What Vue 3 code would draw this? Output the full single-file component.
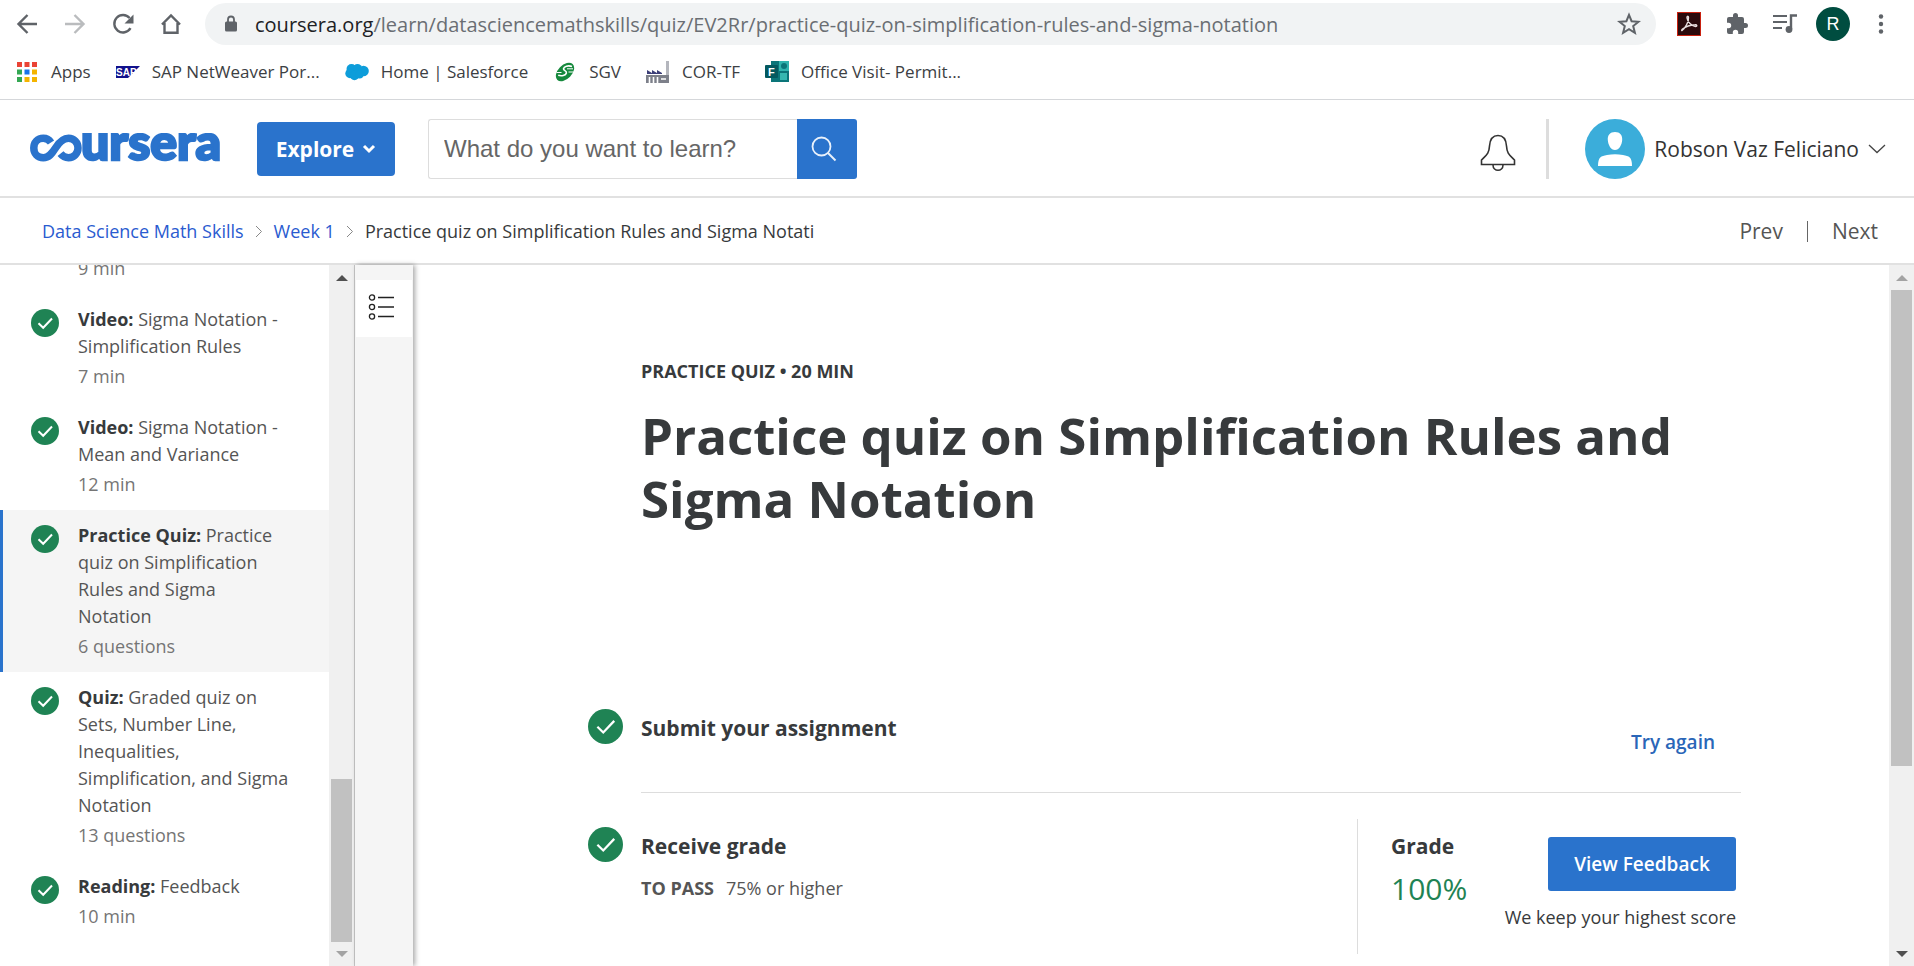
<script setup>
const lessons = [
  { meta: '9 min' },
  { kind: 'Video:', title: 'Sigma Notation - Simplification Rules', meta: '7 min' },
  { kind: 'Video:', title: 'Sigma Notation - Mean and Variance', meta: '12 min' },
  { kind: 'Practice Quiz:', title: 'Practice quiz on Simplification Rules and Sigma Notation', meta: '6 questions', current: true },
  { kind: 'Quiz:', title: 'Graded quiz on Sets, Number Line, Inequalities, Simplification, and Sigma Notation', meta: '13 questions' },
  { kind: 'Reading:', title: 'Feedback', meta: '10 min' },
]
const appColors = ['#ea4335', '#ea4335', '#ea4335', '#34a853', '#1a73e8', '#f4b400', '#34a853', '#f4b400', '#f4b400']
</script>

<template>
  <div class="window">
    <div class="chrome">
      <div class="toolbar">
        <div class="nav">
          <button aria-label="Back"><svg viewBox="0 0 24 24"><path d="M22 12H4M12.500 3L3.500 12l9 9" fill="none" stroke="#5f6368" stroke-width="2.400" /></svg></button>
          <button aria-label="Forward"><svg viewBox="0 0 24 24"><path d="M2 12h18M11.500 3l9 9-9 9" fill="none" stroke="#babcbe" stroke-width="2.400" /></svg></button>
          <button aria-label="Reload"><svg viewBox="0 0 24 24"><path d="M19.500 16.200A8.700 8.700 0 1 1 18.600 6" fill="none" stroke="#5f6368" stroke-width="2.400" /><path d="M22.500 2.500v9h-9z" fill="#5f6368" /></svg></button>
          <button aria-label="Home"><svg viewBox="0 0 24 24"><path d="M3 12.500L12 3.500l9 9M5.500 11v9.800h13V11" fill="none" stroke="#5f6368" stroke-width="2.400" /></svg></button>
        </div>
        <div class="omnibox">
          <svg class="lock" viewBox="0 0 14 18"><rect x="1" y="6.500" width="12" height="10" rx="1.500" fill="#5f6368" /><path d="M4 7V4.500a3 3 0 0 1 6 0V7" fill="none" stroke="#5f6368" stroke-width="1.800" /></svg>
          <span class="url"><span class="host">coursera.org</span>/learn/datasciencemathskills/quiz/EV2Rr/practice-quiz-on-simplification-rules-and-sigma-notation</span>
          <button class="star" aria-label="Bookmark this page"><svg viewBox="0 0 24 24"><path d="M12 2.800l2.600 6.400 6.900.5-5.300 4.400 1.700 6.700L12 17.100l-5.900 3.700 1.700-6.700L2.500 9.700l6.900-.5z" fill="none" stroke="#5f6368" stroke-width="2" /></svg></button>
        </div>
        <div class="extensions">
          <button aria-label="Acrobat"><svg viewBox="0 0 24 24"><rect x=".5" y=".5" width="23" height="23" fill="#2b0a0c" stroke="#c8200f" /><path d="M5 18.500c3-2 7-9 6.500-13-.3-1.800-1.800-1.500-1.500.5.600 4 4.500 8 8.500 8.500 2 0 1.500-2-.5-1.700-4 .3-9 1.700-12.500 4.200-1.300 1.200-.8 2-.5 1.500" fill="none" stroke="#e8dede" stroke-width="1.400" /></svg></button>
          <button aria-label="Extensions"><svg viewBox="0 0 24 24"><path d="M20.500 11H19V7a2 2 0 0 0-2-2h-4V3.500a2.500 2.500 0 0 0-5 0V5H4a2 2 0 0 0-2 2v3.800h1.500a2.700 2.700 0 0 1 0 5.400H2V20a2 2 0 0 0 2 2h3.800v-1.500a2.700 2.700 0 0 1 5.400 0V22H17a2 2 0 0 0 2-2v-4h1.500a2.500 2.500 0 0 0 0-5z" fill="#5f6368" /></svg></button>
          <button aria-label="Media controls"><svg viewBox="0 0 24 24"><path d="M0 4h14M0 10h14M0 16h9" stroke="#5f6368" stroke-width="2.200" /><path d="M18 17V3.500h6" fill="none" stroke="#5f6368" stroke-width="2.400" /><circle cx="16" cy="17.500" r="3.400" fill="#5f6368" /></svg></button>
          <button class="profile">R</button>
          <button aria-label="Menu"><svg viewBox="0 0 24 24"><g fill="#5f6368"><circle cx="12" cy="4.500" r="2.200" /><circle cx="12" cy="12" r="2.200" /><circle cx="12" cy="19.500" r="2.200" /></g></svg></button>
        </div>
      </div>
      <nav class="bookmarks" aria-label="Bookmarks">
        <a href="#"><svg width="24" height="24" viewBox="0 0 24 24"><rect v-for="(c, i) in appColors" :key="i" :x="2 + (i % 3) * 7.500" :y="2 + Math.floor(i / 3) * 7.500" width="5" height="5" :fill="c" /></svg>Apps</a>
        <a href="#"><svg width="24" height="24" viewBox="0 0 24 24"><path d="M0 6h24L12 18H0z" fill="#11118c" /><text x="0" y="15.500" font-family="Liberation Sans" font-weight="700" font-size="10" fill="#fff">SAP</text></svg>SAP NetWeaver Por...</a>
        <a href="#"><svg width="24" height="24" viewBox="0 0 24 24"><g fill="#0d9dda"><circle cx="6.500" cy="9" r="5" /><circle cx="12.500" cy="8.500" r="4.500" /><circle cx="18.500" cy="11" r="5.300" /><circle cx="5" cy="13.500" r="4.700" /><circle cx="9.500" cy="15.500" r="4.700" /><circle cx="14.500" cy="14.500" r="4" /></g></svg>Home | Salesforce</a>
        <a href="#"><svg width="24" height="24" viewBox="0 0 24 24"><ellipse cx="12" cy="12" rx="11" ry="7" transform="rotate(-46 12 12)" fill="#16893d" /><path d="M19 6.500c-4-1.500-8 0-8.500 2.200-.4 2 3.500 2 2.900 4.300-.7 2.600-5 3.300-8.200 2.300" fill="none" stroke="#fff" stroke-width="1.600" /><path d="M14 8.800h6M3.500 12.500h5M15.500 12h5" stroke="#fff" /></svg>SGV</a>
        <a href="#"><svg width="24" height="24" viewBox="0 0 24 24"><path d="M0 15h23v8H0z" fill="#7d808a" /><path d="M20 1h3v14h-3z" fill="#b4b6bd" /><path d="M1 10l5 3v-3l5 3v-3l5 3v1H1z" fill="#3c3f78" /><path d="M3.500 17v6M7.500 17v6M11.500 17v6M15 19h5" stroke="#fff" stroke-width="1.600" /></svg>COR-TF</a>
        <a href="#"><svg width="24" height="24" viewBox="0 0 24 24"><path d="M6 1h18v21H6z" fill="#0b7579" /><path d="M14 1h10v10H14z" fill="#2fb3ae" /><circle cx="19" cy="6" r="3" fill="#0b7579" /><path d="M15 13h7v7h-7z" fill="#35b7b0" /><rect y="5" width="13" height="13" rx="1" fill="#04595f" /><text x="3" y="15.500" font-family="Liberation Sans" font-weight="700" font-size="11" fill="#fff">F</text></svg>Office Visit- Permit...</a>
      </nav>
    </div>

    <header class="site">
      <a class="logo" href="#" aria-label="Coursera">
        <svg width="192" height="32" viewBox="0 0 192 32">
          <path d="M22 9.500C20 6.500 17 5.300 14.300 5.300C8.500 5.300 4.800 9.500 4.800 15S8.500 24.700 14.300 24.700C20 24.700 23 20.500 26.500 15S34 5.300 39.500 5.300C45 5.300 49 9.500 49 15S45 24.700 39.500 24.700C36 24.700 33.500 23.200 31.500 20.700" fill="none" stroke="#2a73cc" stroke-width="7.500" />
          <text x="52" y="27" font-family="Lato" font-weight="900" font-size="50" fill="#2a73cc" stroke="#2a73cc" stroke-width="2.500">ursera</text>
        </svg>
      </a>
      <button class="explore">Explore<svg width="14" height="10" viewBox="0 0 14 10"><path d="M2 2l5 5 5-5" fill="none" stroke="#fff" stroke-width="3" /></svg></button>
      <form class="search" @submit.prevent>
        <input type="text" aria-label="Search" placeholder="What do you want to learn?">
        <button aria-label="Submit search"><svg width="26" height="26" viewBox="0 0 26 26"><circle cx="10.500" cy="10.500" r="9" fill="none" stroke="#e9f1fb" stroke-width="1.800" /><path d="M17 17l7.500 7.500" stroke="#e9f1fb" stroke-width="2" /></svg></button>
      </form>
      <button class="bell" aria-label="Notifications"><svg width="36" height="38" viewBox="0 0 36 38"><path d="M1.500 30.500v-4.500c5-5 7.500-6 8-14C10 5 13 1.500 18 1.500S26 5 26.500 12c.5 8 3 9 8 14v4.500zM13 31c0 7 10 7 10 0" fill="none" stroke="#333" stroke-width="1.600" /></svg></button>
      <button class="account">
        <svg width="60" height="60" viewBox="0 0 60 60"><circle cx="30" cy="30" r="30" fill="#3badda" /><path d="M30 13c5 0 7.500 3 7.200 8-.3 5-3.200 10-7.200 10s-6.900-5-7.200-10c-.3-5 2.200-8 7.200-8zM13 47c0-9 3-10 9-11q8-1.500 16 0c6 1 9 2 9 11z" fill="#fff" /></svg>
        <span>Robson Vaz Feliciano</span>
        <svg class="chev" width="18" height="10" viewBox="0 0 18 10"><path d="M1 1l8 7.500L17 1" fill="none" stroke="#444" stroke-width="1.300" /></svg>
      </button>
    </header>

    <div class="crumbbar">
      <nav class="crumbs" aria-label="Breadcrumb">
        <a href="#">Data Science Math Skills</a>
        <svg width="8" height="13" viewBox="0 0 8 13"><path d="M1 1l5.500 5.500L1 12" fill="none" stroke="#888" /></svg>
        <a href="#">Week 1</a>
        <svg width="8" height="13" viewBox="0 0 8 13"><path d="M1 1l5.500 5.500L1 12" fill="none" stroke="#888" /></svg>
        <span>Practice quiz on Simplification Rules and Sigma Notati</span>
      </nav>
      <nav class="pager" aria-label="Lesson navigation"><a href="#">Prev</a><i></i><a href="#">Next</a></nav>
    </div>

    <div class="body">
      <aside class="sidebar">
        <ul class="lessons">
          <li v-for="l in lessons" :key="l.meta" :class="{ current: l.current, partial: !l.title }">
            <svg v-if="l.title" class="check" viewBox="0 0 28 28"><circle cx="14" cy="14" r="14" fill="#1f8354" /><path d="M7.500 14.200l4.700 4.600L21 9.500" fill="none" stroke="#fff" stroke-width="2" /></svg>
            <a href="#"><span v-if="l.title" class="name"><b>{{ l.kind }}</b> {{ l.title }}</span><span class="meta">{{ l.meta }}</span></a>
          </li>
        </ul>
        <div class="bar lesson-bar"><span class="up dark"></span><div class="track"><div class="thumb"></div></div><span class="down"></span></div>
      </aside>
      <div class="rail">
        <button aria-label="Toggle outline"><svg width="28" height="28" viewBox="0 0 28 28"><g fill="none" stroke="#222" stroke-width="1.300"><circle cx="4" cy="4.500" r="2.600" /><circle cx="4" cy="14" r="2.600" /><circle cx="4" cy="23.500" r="2.600" /><path d="M10 4.500h16M10 14h16M10 23.500h16" /></g></svg></button>
      </div>
      <main>
        <div class="eyebrow">PRACTICE QUIZ • 20 MIN</div>
        <h1>Practice quiz on Simplification Rules and Sigma Notation</h1>
        <section class="step submit">
          <svg class="check big" viewBox="0 0 28 28"><circle cx="14" cy="14" r="14" fill="#1f8354" /><path d="M7.500 14.200l4.700 4.600L21 9.500" fill="none" stroke="#fff" stroke-width="1.800" /></svg>
          <div class="content">
            <h2>Submit your assignment</h2>
            <button class="again">Try again</button>
          </div>
        </section>
        <section class="step">
          <svg class="check big" viewBox="0 0 28 28"><circle cx="14" cy="14" r="14" fill="#1f8354" /><path d="M7.500 14.200l4.700 4.600L21 9.500" fill="none" stroke="#fff" stroke-width="1.800" /></svg>
          <div class="content">
            <div>
              <h2>Receive grade</h2>
              <p class="pass"><b>TO PASS</b><span>75% or higher</span></p>
            </div>
            <div class="grade">
              <div><h2>Grade</h2><p class="score">100%</p></div>
              <div class="feedback"><button>View Feedback</button><p>We keep your highest score</p></div>
            </div>
          </div>
        </section>
      </main>
      <div class="bar page-bar"><span class="up"></span><div class="track"><div class="thumb"></div></div><span class="down dark"></span></div>
    </div>
  </div>
</template>

<style>
body { margin: 0; }
</style>

<style scoped>
* { box-sizing: border-box; }
.window { height: 100vh; display: flex; flex-direction: column; overflow: hidden; background: #fff; color: #373a3c; font: 18px/27px "Open Sans", "Noto Sans", sans-serif; }
button { font: inherit; color: inherit; background: none; border: 0; padding: 0; display: flex; align-items: center; justify-content: center; flex: none; }
a { color: inherit; text-decoration: none; }
svg { display: block; flex: none; }
h1, h2, p, ul { margin: 0; padding: 0; }

.chrome { flex: none; padding-bottom: 4px; border-bottom: 1px solid #d5d7da; }
.toolbar { display: flex; align-items: center; height: 48px; padding: 0 21px 0 15px; }
.nav, .extensions { display: flex; align-items: center; gap: 24px; }
.nav svg, .extensions svg, .star svg { width: 24px; height: 24px; }
.omnibox { flex: 1; min-width: 0; display: flex; align-items: center; height: 42px; margin: 0 21px 0 22px; padding: 0 15px 0 19px; border-radius: 21px; background: #f1f3f4; }
.lock { width: 14px; height: 18px; }
.url { flex: 1; min-width: 0; margin-left: 17px; overflow: hidden; white-space: nowrap; color: #6a6e73; font-size: 20px; }
.host { color: #202124; }
.profile { width: 34px; height: 34px; margin: 0 -5px; border-radius: 50%; background: #004d40; color: #fff; font: 18px "Liberation Sans", sans-serif; }
.bookmarks { display: flex; align-items: center; height: 47px; padding-left: 15px; gap: 25px; color: #3c4043; font-size: 17px; }
.bookmarks a { display: flex; align-items: center; gap: 12px; white-space: nowrap; }

.site { flex: none; display: flex; align-items: center; height: 98px; padding: 2px 28px 0 29px; border-bottom: 2px solid #e1e1e1; }
.explore { width: 138px; height: 54px; margin: 0 33px 0 36px; gap: 8px; border-radius: 4px; background: #2a73cc; color: #fff; font-size: 21px; font-weight: 700; }
.search { display: flex; height: 60px; }
.search input { width: 369px; min-width: 0; padding: 0 15px; border: 1px solid #ddd; border-right: 0; border-radius: 3px 0 0 3px; font: 24px "Liberation Sans", Arial, sans-serif; }
.search input::placeholder { color: #666; opacity: 1; }
.search button { width: 60px; padding-right: 6px; background: #2a73cc; border-radius: 0 3px 3px 0; }
.bell { margin-left: auto; padding: 8px 30px 0 0; height: 60px; border-right: 3px solid #ddd; }
.account { margin-left: 36px; gap: 9px; font-size: 21px; color: #333; white-space: nowrap; }

.crumbbar { flex: none; display: flex; align-items: center; justify-content: space-between; height: 67px; padding: 2px 36px 0 42px; border-bottom: 2px solid #e1e1e1; }
.crumbs { display: flex; align-items: center; gap: 11px; white-space: nowrap; color: #373a3c; }
.crumbs a { color: #2a5bd0; }
.pager { display: flex; align-items: center; gap: 24px; font-size: 21px; color: #555; }
.pager i { width: 1px; height: 21px; background: #666; }

.body { flex: 1; min-height: 0; display: flex; }
.sidebar { flex: none; display: flex; width: 355px; border-right: 1px solid #c8c8c8; }
.lessons { flex: 1; min-width: 0; display: flex; flex-direction: column; justify-content: flex-end; padding-bottom: 24px; overflow: hidden; list-style: none; }
.lessons li { flex: none; display: flex; gap: 19px; padding: 12px 38px 12px 28px; border-left: 3px solid transparent; }
.lessons li.current { background: #f5f5f5; border-color: #2a73cc; }
.lessons li.partial { padding-top: 0; padding-left: 75px; }
.lessons a { min-width: 0; }
.check { width: 28px; height: 28px; margin-top: 3px; }
.name, .meta { display: block; }
.name { color: #555; }
.name b { color: #373a3c; }
.meta { margin-top: 3px; color: #757575; }

.bar { flex: none; display: flex; flex-direction: column; align-items: center; width: 25px; padding: 10px 0 9px; background: #f0f0f0; }
.bar span { width: 0; height: 0; border: 6px solid transparent; color: #a3a3a3; }
.bar span.dark { color: #505050; }
.bar .up { border-top: 0; border-bottom-color: currentColor; }
.bar .down { border-bottom: 0; border-top-color: currentColor; }
.track { flex: 1; width: 21px; margin: 9px 0; display: flex; flex-direction: column; }
.thumb { background: #c1c1c1; }
.lesson-bar .track { justify-content: flex-end; }
.lesson-bar .thumb { height: 25%; }
.page-bar .thumb { height: 73%; }

.rail { flex: none; width: 58px; padding: 15px 1px 0; background: #f5f5f5; box-shadow: 2px 0 5px rgba(0, 0, 0, .35); }
.rail button { width: 100%; height: 57px; padding: 0 4px 4px 0; background: #fff; }

main { flex: 1; min-width: 0; padding: 94px 148px 0 175px; overflow: hidden; }
.eyebrow { margin-left: 53px; line-height: 24px; font-weight: 700; }
h1 { margin: 21px 0 179px 53px; font-size: 51px; line-height: 63px; font-weight: 700; }
h2 { font-size: 21px; line-height: 27px; font-weight: 700; }
.step { display: flex; gap: 18px; }
.check.big { width: 35px; height: 35px; margin-top: 0; }
.content { flex: 1; min-width: 0; display: flex; justify-content: space-between; }
.submit .content { height: 84px; padding-top: 6px; border-bottom: 1px solid #ddd; }
.submit + .step { margin-top: 26px; }
.submit + .step .check { margin-top: 8px; }
.submit + .step h2 { margin-top: 14px; }
.again { height: 54px; padding: 0 26px; color: #2a66b8; font-size: 19px; font-weight: 600; }
.pass { display: flex; gap: 12px; margin-top: 15px; color: #555; }
.grade { display: flex; justify-content: space-between; width: 384px; height: 135px; padding: 0 5px 0 33px; border-left: 1px solid #ddd; }
.score { margin-top: 9px; font-size: 30px; line-height: 40px; color: #1f8354; }
.feedback { display: flex; flex-direction: column; align-items: flex-end; padding-top: 18px; }
.feedback button { width: 188px; height: 54px; border-radius: 3px; background: #2a73cc; color: #fff; font-size: 19px; font-weight: 600; }
.feedback p { margin-top: 13px; white-space: nowrap; }
</style>
